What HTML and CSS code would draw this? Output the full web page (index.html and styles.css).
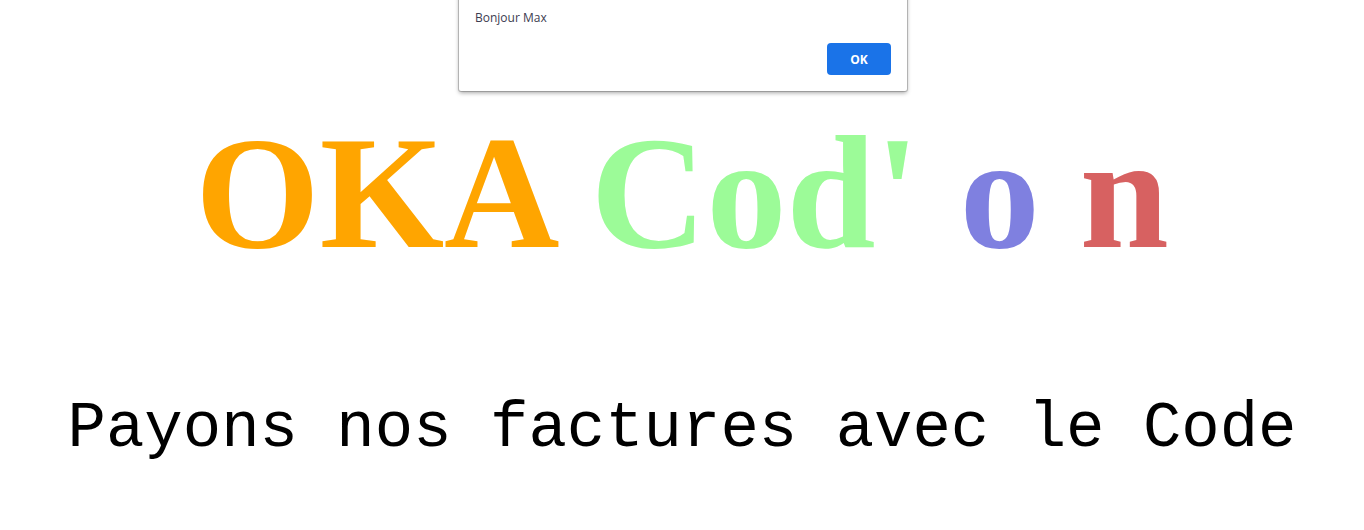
FILE: index.html
```html
<!DOCTYPE html>
<html lang="fr">
<head>
<meta charset="utf-8">
<title>OKA Cod'on</title>
<link rel="stylesheet" href="styles.css">
</head>
<body>
<main class="page">
  <h1 class="title"><span class="t-orange">OKA</span> <span class="t-green">Cod'</span> <span class="t-blue">o</span> <span class="t-red">n</span></h1>
  <p class="tagline">Payons nos factures avec le Code</p>
</main>
<div class="alert">
  <p class="alert-msg">Bonjour Max</p>
  <div class="alert-actions"><button class="alert-ok">OK</button></div>
</div>
</body>
</html>
```
FILE: styles.css
```css
html, body { margin: 0; padding: 0; background: #fff; }
.page {
  width: 1364px;
  height: 530px;
  display: flex;
  flex-direction: column;
  align-items: center;
}
.title {
  margin: 98px 0 0 0;
  font-family: "Liberation Serif", "Times New Roman", serif;
  font-weight: bold;
  font-size: 160px;
  line-height: 190px;
  white-space: nowrap;
}
.t-orange { color: #ffa500; }
.t-green { color: #9cfb98; }
.t-blue { color: #7f80e0; }
.t-red { color: #d76161; }
.tagline {
  margin: 105px 0 0 0;
  font-family: "Liberation Mono", "Courier New", monospace;
  font-size: 64px;
  line-height: 72px;
  color: #000;
  white-space: pre;
}
.alert {
  position: absolute;
  left: 459px;
  top: -20px;
  width: 448px;
  height: 111px;
  box-sizing: border-box;
  background: #fff;
  border-radius: 2px;
  box-shadow: 0 0 0 1px rgba(0,0,0,0.18), 0 2px 4px rgba(0,0,0,0.35);
  padding: 30px 16px 0 16px;
  font-family: "Open Sans", "Noto Sans", sans-serif;
}
.alert-msg {
  margin: 0;
  font-size: 12px;
  line-height: 16px;
  color: #3c3c50;
}
.alert-actions {
  display: flex;
  justify-content: flex-end;
  margin-top: 17px;
}
.alert-ok {
  width: 64px;
  height: 32px;
  border: none;
  border-radius: 4px;
  background: #1a73e8;
  color: #fff;
  font-family: "Open Sans", "Noto Sans", sans-serif;
  font-weight: bold;
  font-size: 12px;
  padding: 0;
}
```
